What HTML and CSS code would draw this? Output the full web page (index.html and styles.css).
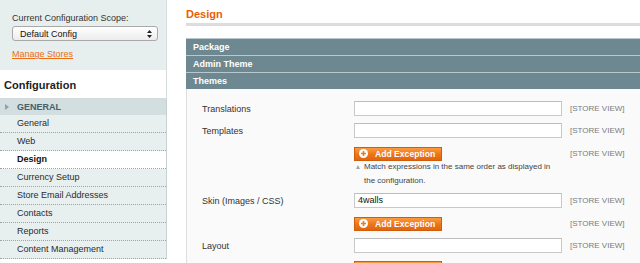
FILE: index.html
```html
<!DOCTYPE html>
<html>
<head>
<meta charset="utf-8">
<link rel="stylesheet" href="styles.css">
</head>
<body>
<div class="page">
  <aside class="side">
    <div class="scope">
      <div class="scope-label">Current Configuration Scope:</div>
      <div class="select">
        <span>Default Config</span>
        <svg class="arrows" width="5" height="8" viewBox="0 0 5 8"><path d="M2.5 0 L5 3 L0 3 Z M0 5 L5 5 L2.5 8 Z" fill="#222"/></svg>
      </div>
      <a class="manage" href="#">Manage Stores</a>
    </div>
    <h3 class="side-title">Configuration</h3>
    <div class="group"><span class="tri"></span>GENERAL</div>
    <ul class="items">
      <li>General</li>
      <li>Web</li>
      <li class="active">Design</li>
      <li>Currency Setup</li>
      <li>Store Email Addresses</li>
      <li>Contacts</li>
      <li>Reports</li>
      <li>Content Management</li>
    </ul>
  </aside>
  <main class="main">
    <h2 class="title">Design</h2>
    <div class="sec">Package</div>
    <div class="sec">Admin Theme</div>
    <div class="sec">Themes</div>
    <div class="panel">
      <div class="row r1"><span class="label">Translations</span><span class="field"><span class="input"></span></span><span class="sv">[STORE VIEW]</span></div>
      <div class="row r2"><span class="label">Templates</span><span class="field"><span class="input"></span></span><span class="sv">[STORE VIEW]</span></div>
      <div class="row r3 btnrow"><span class="label"></span><span class="field"><span class="btn"><svg width="9" height="9" viewBox="0 0 9 9"><circle cx="4.5" cy="4.5" r="4.5" fill="#fff"/><path d="M4.5 2 V7 M2 4.5 H7" stroke="#f07a1a" stroke-width="1.6"/></svg>Add Exception</span></span><span class="sv">[STORE VIEW]</span></div>
      <div class="note">Match expressions in the same order as displayed in the configuration.</div>
      <div class="row r4"><span class="label">Skin (Images / CSS)</span><span class="field"><span class="input">4walls</span></span><span class="sv">[STORE VIEW]</span></div>
      <div class="row r5 btnrow"><span class="label"></span><span class="field"><span class="btn"><svg width="9" height="9" viewBox="0 0 9 9"><circle cx="4.5" cy="4.5" r="4.5" fill="#fff"/><path d="M4.5 2 V7 M2 4.5 H7" stroke="#f07a1a" stroke-width="1.6"/></svg>Add Exception</span></span><span class="sv">[STORE VIEW]</span></div>
      <div class="row r6"><span class="label">Layout</span><span class="field"><span class="input"></span></span><span class="sv">[STORE VIEW]</span></div>
      <div class="row r7 btnrow"><span class="label"></span><span class="field"><span class="btn"><svg width="9" height="9" viewBox="0 0 9 9"><circle cx="4.5" cy="4.5" r="4.5" fill="#fff"/><path d="M4.5 2 V7 M2 4.5 H7" stroke="#f07a1a" stroke-width="1.6"/></svg>Add Exception</span></span><span class="sv">[STORE VIEW]</span></div>
    </div>
  </main>
</div>
</body>
</html>
```

FILE: styles.css
```css
* { box-sizing: border-box; }
html, body { margin: 0; padding: 0; background: #fff; overflow: hidden; }
body { font-family: "Liberation Sans", Arial, sans-serif; color: #2f2f2f; width: 640px; height: 263px; }
.page { display: flex; align-items: flex-start; height: 263px; }

.side { width: 167px; flex: none; }
.scope { background: #e6eeee; height: 70px; padding: 13px 8px 0 12px; border-right: 1px solid #d5dddd; }
.scope-label { font-size: 9px; line-height: 11px; color: #333; }
.select { margin-top: 2px; height: 15px; width: 146px; border: 1px solid #a9a9a9; border-radius: 3px; background: linear-gradient(#ffffff, #ececec); display: flex; align-items: center; justify-content: space-between; padding: 0 5px 0 7px; font-size: 9px; color: #111; }
.arrows { display: block; }
.manage { display: block; margin-top: 8px; font-size: 9px; line-height: 11px; color: #eb6d15; text-decoration: underline; width: max-content; }
.side-title { margin: 0; height: 29px; padding: 9px 0 0 4px; font-size: 11px; line-height: 13px; font-weight: bold; color: #1e1e1e; background: #fff; border-right: 1px solid #d5dddd; border-bottom: 1px solid #d3dcdc; }
.group { height: 16px; background: #d2dedf; font-size: 9px; font-weight: bold; color: #43606c; line-height: 16px; padding-left: 17px; position: relative; border-right: 1px solid #c4d0d0; }
.tri { position: absolute; left: 5px; top: 5px; width: 0; height: 0; border-left: 4px solid #8fa3ab; border-top: 3px solid transparent; border-bottom: 3px solid transparent; }
.items { list-style: none; margin: 0; padding: 0; background: #e7efef; border-right: 1px solid #c8d2d2; }
.items li { height: 18px; line-height: 17px; padding-left: 17px; font-size: 9px; color: #2b2b2b; border-bottom: 1px dotted #9aa5a5; }
.items li.active { background: #fff; font-weight: bold; color: #111; }

.main { margin-left: 19px; flex: 1; }
.title { margin: 0; height: 26px; padding-top: 8px; font-size: 11px; line-height: 13px; font-weight: bold; color: #eb5e00; border-bottom: 3px solid #dddddd; }
.sec { height: 17px; margin-top: 0; background: #6e8891; border-top: 1px solid #b9c8cc; color: #fff; font-size: 9px; font-weight: bold; line-height: 16px; padding-left: 7px; }
.sec:first-of-type { margin-top: 12px; }
.title + .sec { margin-top: 12px; }
.panel { background: #fafafa; border-left: 1px solid #dedede; padding: 12px 0 0 15px; height: 200px; }
.row { display: flex; align-items: center; height: 15px; }
.label { width: 152px; flex: none; font-size: 9px; color: #333; }
.field { width: 208px; flex: none; }
.input { display: block; height: 15px; width: 208px; background: #fff; border: 1px solid #c9c9c9; border-top-color: #bdbdbd; font-size: 9px; line-height: 13px; padding-left: 3px; color: #111; }
.sv { margin-left: 8px; font-size: 8px; color: #7a7a7a; }
.btnrow { height: 14px; }
.btn { display: inline-flex; align-items: center; gap: 7px; height: 14px; width: 88px; padding-left: 4px; background: linear-gradient(#fb9b3f, #ec7416 55%, #e2660b); border: 1px solid #cf5d0b; color: #fff; font-size: 8.6px; font-weight: bold; }
.btn svg { display: block; flex: none; }
.r2 { margin-top: 7px; }
.r3 { margin-top: 8px; }
.note { margin-left: 152px; width: 208px; font-size: 8px; line-height: 14px; color: #444; padding-left: 10px; position: relative; }
.note::before { content: ""; position: absolute; left: 2px; top: 5px; width: 0; height: 0; border-bottom: 4px solid #9aa8ae; border-left: 2.5px solid transparent; border-right: 2.5px solid transparent; }
.r4 { margin-top: 5px; }
.r5 { margin-top: 8px; }
.r6 { margin-top: 8px; }
.r7 { margin-top: 7px; }
```
